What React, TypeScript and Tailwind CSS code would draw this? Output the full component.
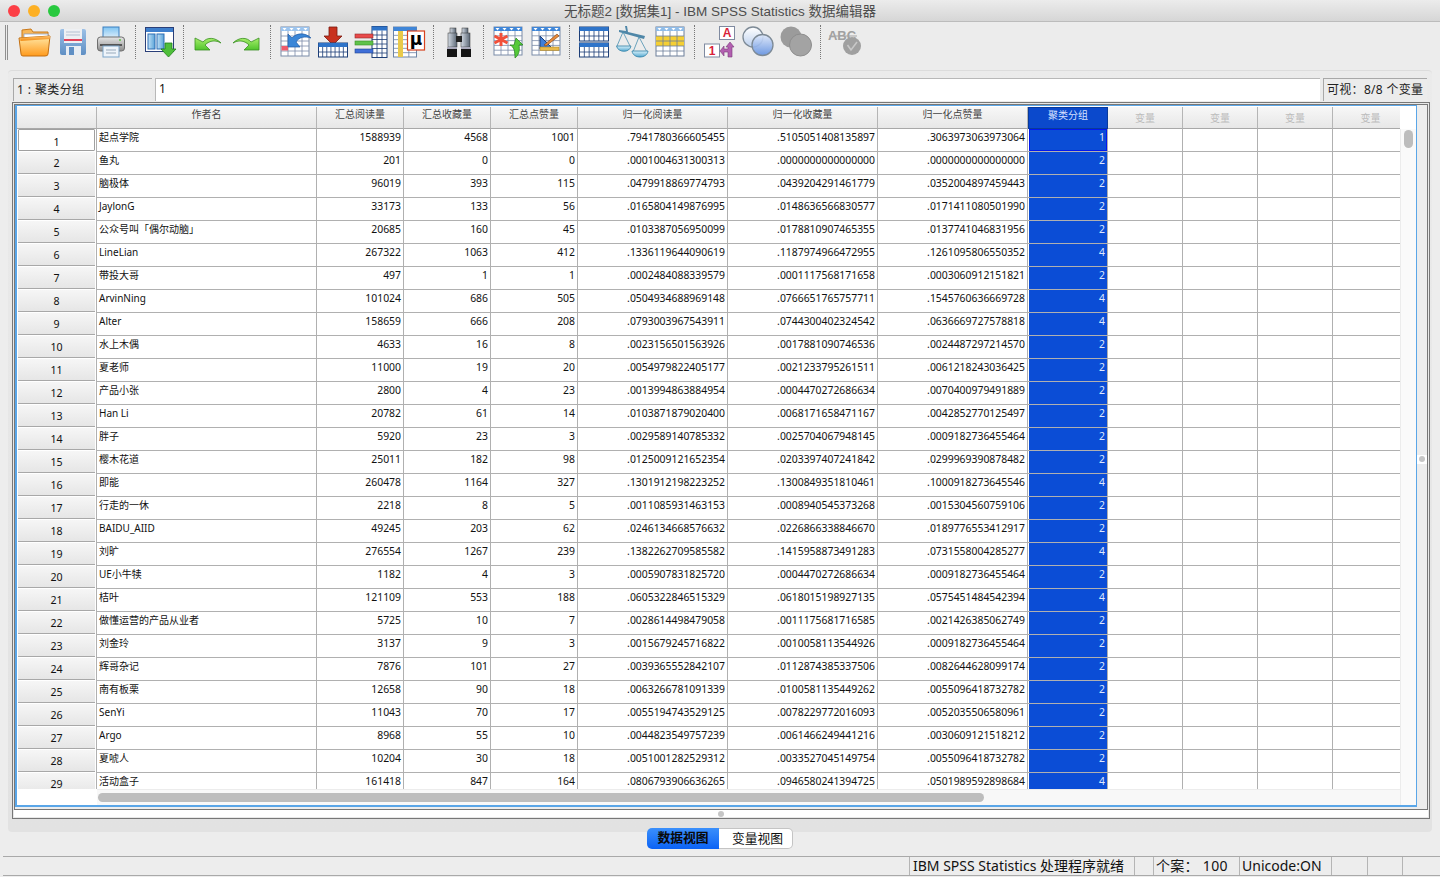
import type { ReactNode } from 'react';

const latin = "font-['Noto_Sans','Noto_Sans_CJK_SC',sans-serif]";

const raw = `起点学院|1588939|4568|1001|.7941780366605455|.5105051408135897|.3063973063973064|1
鱼丸|201|0|0|.0001004631300313|.0000000000000000|.0000000000000000|2
脑极体|96019|393|115|.0479918869774793|.0439204291461779|.0352004897459443|2
JaylonG|33173|133|56|.0165804149876995|.0148636566830577|.0171411080501990|2
公众号叫「偶尔动脑」|20685|160|45|.0103387056950099|.0178810907465355|.0137741046831956|2
LineLian|267322|1063|412|.1336119644090619|.1187974966472955|.1261095806550352|4
带投大哥|497|1|1|.0002484088339579|.0001117568171658|.0003060912151821|2
ArvinNing|101024|686|505|.0504934688969148|.0766651765757711|.1545760636669728|4
Alter|158659|666|208|.0793003967543911|.0744300402324542|.0636669727578818|4
水上木偶|4633|16|8|.0023156501563926|.0017881090746536|.0024487297214570|2
夏老师|11000|19|20|.0054979822405177|.0021233795261511|.0061218243036425|2
产品小张|2800|4|23|.0013994863884954|.0004470272686634|.0070400979491889|2
Han Li|20782|61|14|.0103871879020400|.0068171658471167|.0042852770125497|2
胖子|5920|23|3|.0029589140785332|.0025704067948145|.0009182736455464|2
樱木花道|25011|182|98|.0125009121652354|.0203397407241842|.0299969390878482|2
即能|260478|1164|327|.1301912198223252|.1300849351810461|.1000918273645546|4
行走的一休|2218|8|5|.0011085931463153|.0008940545373268|.0015304560759106|2
BAIDU_AIID|49245|203|62|.0246134668576632|.0226866338846670|.0189776553412917|2
刘旷|276554|1267|239|.1382262709585582|.1415958873491283|.0731558004285277|4
UE小牛犊|1182|4|3|.0005907831825720|.0004470272686634|.0009182736455464|2
桔叶|121109|553|188|.0605322846515329|.0618015198927135|.0575451484542394|4
做懂运营的产品从业者|5725|10|7|.0028614498479058|.0011175681716585|.0021426385062749|2
刘金玲|3137|9|3|.0015679245716822|.0010058113544926|.0009182736455464|2
辉哥杂记|7876|101|27|.0039365552842107|.0112874385337506|.0082644628099174|2
南有板栗|12658|90|18|.0063266781091339|.0100581135449262|.0055096418732782|2
SenYi|11043|70|17|.0055194743529125|.0078229772016093|.0052035506580961|2
Argo|8968|55|10|.0044823549757239|.0061466249441216|.0030609121518212|2
夏唬人|10204|30|18|.0051001282529312|.0033527045149754|.0055096418732782|2
活动盒子|161418|847|164|.0806793906636265|.0946580241394725|.0501989592898684|4`;

const rows = raw.split('\n').map((l) => l.split('|'));

const numCols = [
  { w: 'w-[87px]', title: '汇总阅读量' },
  { w: 'w-[87px]', title: '汇总收藏量' },
  { w: 'w-[87px]', title: '汇总点赞量' },
  { w: 'w-[150px]', title: '归一化阅读量' },
  { w: 'w-[150px]', title: '归一化收藏量' },
  { w: 'w-[150px]', title: '归一化点赞量' },
];
const emptyCols = ['w-[75px]', 'w-[75px]', 'w-[75px]', 'w-[68px]'];

function Lg({ id, a, b, h }: { id: string; a: string; b: string; h?: boolean }) {
  return (
    <linearGradient id={id} x1="0" y1="0" x2={h ? '1' : '0'} y2={h ? '0' : '1'}>
      <stop offset="0" stopColor={a} />
      <stop offset="1" stopColor={b} />
    </linearGradient>
  );
}

// small spreadsheet used by most toolbar icons
function Tbl({ x, y, w, h, rows, cols, head = '#2f74c9', line = '#5d7ca6', lit, ticks }: {
  x: number; y: number; w: number; h: number; rows: number; cols: number; head?: string; line?: string; lit?: number; ticks?: boolean;
}) {
  const cw = w / cols;
  const rh = (h - 4) / rows;
  return (
    <g>
      <rect x={x} y={y} width={w} height={h} fill="#fff" stroke={line} />
      <rect x={x} y={y} width={w} height={4} fill={head} />
      {ticks && Array.from({ length: cols }, (_, i) => (
        <path key={i} d={`M${x + cw * i + cw / 2 - 2} ${y + 1} h4 l-2 2.5 z`} fill="#fff" />
      ))}
      {lit !== undefined && <rect x={x} y={y + 4 + lit * rh} width={w} height={rh * 2} fill="#f5cf33" />}
      {Array.from({ length: cols - 1 }, (_, i) => (
        <line key={i} x1={x + cw * (i + 1)} y1={y + 4} x2={x + cw * (i + 1)} y2={y + h} stroke={line} strokeWidth="0.8" />
      ))}
      {Array.from({ length: rows - 1 }, (_, i) => (
        <line key={i} x1={x} y1={y + 4 + rh * (i + 1)} x2={x + w} y2={y + 4 + rh * (i + 1)} stroke={line} strokeWidth="0.8" />
      ))}
    </g>
  );
}

function Ico({ children }: { children: ReactNode }) {
  return <svg width="34" height="34" viewBox="0 0 34 34">{children}</svg>;
}

const icons: Record<string, ReactNode> = {
  open: (
    <Ico>
      <defs>
        <Lg id="f1" a="#ffe9a8" b="#ff9a1c" />
        <Lg id="f2" a="#ffc06a" b="#f08a12" />
      </defs>
      <path d="M4 5 L13 4 L15 7 L30 7 L30 16 L4 16 Z" fill="#f7b75a" stroke="#c9781a" />
      <rect x="6" y="9" width="24" height="8" fill="#fff" stroke="#7d97c4" strokeWidth="0.7" />
      <path d="M1 13 L32 11 L30 29 Q30 31 27 31 L5 31 Q3 31 3 29 Z" fill="url(#f1)" stroke="#c46f10" />
      <path d="M2 13 L32 11 L31.5 14 L2.5 16 Z" fill="url(#f2)" />
    </Ico>
  ),
  save: (
    <Ico>
      <defs><Lg id="s1" a="#9cc0e6" b="#5f8fc4" /></defs>
      <rect x="4" y="4" width="26" height="26" rx="2" fill="url(#s1)" />
      <rect x="8" y="4" width="18" height="14" fill="#eef0f3" />
      <rect x="8" y="14" width="18" height="2" fill="#e2425a" />
      <line x1="10" y1="7" x2="24" y2="7" stroke="#b5c2d2" />
      <line x1="10" y1="10" x2="24" y2="10" stroke="#b5c2d2" />
      <rect x="10" y="21" width="15" height="9" fill="#e8edf3" />
      <rect x="13" y="22" width="5" height="8" fill="#5f8fc4" />
    </Ico>
  ),
  print: (
    <Ico>
      <defs>
        <Lg id="p1" a="#e6e6e6" b="#8d8d8d" />
        <Lg id="p2" a="#7fc4f2" b="#e6f2fb" />
      </defs>
      <rect x="9" y="2" width="16" height="12" fill="url(#p2)" stroke="#3b7fc0" />
      <rect x="3.5" y="12" width="27" height="14" rx="3" fill="url(#p1)" stroke="#6e6e6e" />
      <rect x="6" y="19" width="22" height="2" fill="#555" />
      <circle cx="26" cy="15" r="1" fill="#5fc24a" />
      <rect x="9" y="21" width="16" height="11" fill="#eef4fa" stroke="#7da5c9" />
      <line x1="12" y1="25" x2="22" y2="25" stroke="#9ab" />
      <line x1="12" y1="28" x2="22" y2="28" stroke="#9ab" />
    </Ico>
  ),
  goto: (
    <Ico>
      <defs><Lg id="g1" a="#bfe0f6" b="#5aa3d8" h /></defs>
      <rect x="2.5" y="2.5" width="28" height="24" fill="#fff" stroke="#2a3f78" />
      <rect x="3" y="3" width="27" height="4" fill="#3f7fcc" />
      <rect x="5" y="9" width="7" height="15" fill="url(#g1)" stroke="#2f6fb5" />
      <rect x="14" y="9" width="7" height="15" fill="url(#g1)" stroke="#2f6fb5" />
      <path d="M22 18 H29 V24 H33 L25.5 32 L18 24 H22 Z" fill="#4fbf3a" stroke="#1f7f1a" strokeWidth="0.8" />
    </Ico>
  ),
  undo: (
    <Ico>
      <defs><Lg id="u1" a="#a8ee6c" b="#4fc42c" /></defs>
      <path d="M4 13 L12 17 C16 12 24 12 30 18 C25 15 19 15 14 20 L19 25 L4 25 Z" fill="url(#u1)" stroke="#3a8f24" strokeWidth="0.8" />
    </Ico>
  ),
  redo: (
    <Ico>
      <defs><Lg id="r1" a="#a8ee6c" b="#4fc42c" /></defs>
      <path d="M30 13 L22 17 C18 12 10 12 4 18 C9 15 15 15 20 20 L15 25 L30 25 Z" fill="url(#r1)" stroke="#3a8f24" strokeWidth="0.8" />
    </Ico>
  ),
  gotoCase: (
    <Ico>
      <Tbl x={3} y={2} w={28} h={29} rows={5} cols={4} head="#9cc4ee" line="#7b8ca8" ticks />
      <rect x="3.5" y="21" width="6.5" height="4.5" fill="#ef5b6c" />
      <path d="M10 9 L14 13 C18 8 27 7 33 13 C27 11 21 12 18 17 L22 22 L10 22 Z" fill="#3a86d8" stroke="#1f5aa5" strokeWidth="0.7" />
    </Ico>
  ),
  gotoVar: (
    <Ico>
      <path d="M13 2 H21 V11 H26 L17 20 L8 11 H13 Z" fill="#c8321f" stroke="#7a1a10" strokeWidth="0.8" />
      <Tbl x={2.5} y={18} w={29} h={14} rows={2} cols={7} head="#2f74c9" line="#1d3e77" />
    </Ico>
  ),
  vars: (
    <Ico>
      <Tbl x={18} y={1.5} w={15} h={31} rows={6} cols={3} head="#2f74c9" line="#1d3e77" />
      <rect x="1" y="9" width="18" height="4" fill="#e84a4a" stroke="#8f2a2a" strokeWidth="0.6" />
      <rect x="1" y="16" width="18" height="4" fill="#5fc24a" stroke="#3a8f24" strokeWidth="0.6" />
      <rect x="1" y="24" width="18" height="4" fill="#3f6fd8" stroke="#24458f" strokeWidth="0.6" />
    </Ico>
  ),
  stats: (
    <Ico>
      <Tbl x={1.5} y={2} w={23} h={30} rows={6} cols={3} head="#3f86d8" line="#6d84a6" />
      <rect x="6" y="6" width="5" height="26" fill="#e9c94a" />
      <rect x="15.5" y="6" width="17" height="19" fill="#fff" stroke="#d8421f" strokeWidth="1.2" />
      <text x="24" y="20" textAnchor="middle" fontSize="17" fontWeight="900" fill="#000" fontFamily="'DejaVu Sans',sans-serif">μ</text>
    </Ico>
  ),
  find: (
    <Ico>
      <defs><Lg id="b1" a="#d4dbe4" b="#5b6775" h /></defs>
      <rect x="8" y="3" width="6" height="6" fill="url(#b1)" stroke="#333" strokeWidth="0.5" />
      <rect x="20" y="3" width="6" height="6" fill="url(#b1)" stroke="#333" strokeWidth="0.5" />
      <rect x="6" y="8" width="9" height="14" fill="url(#b1)" stroke="#333" strokeWidth="0.5" />
      <rect x="19" y="8" width="9" height="14" fill="url(#b1)" stroke="#333" strokeWidth="0.5" />
      <rect x="14" y="11" width="6" height="6" fill="#222" />
      <rect x="5" y="22" width="10" height="10" fill="#151515" />
      <rect x="19" y="22" width="10" height="10" fill="#151515" />
      <rect x="5" y="22" width="10" height="2" fill="#aab" />
      <rect x="19" y="22" width="10" height="2" fill="#aab" />
    </Ico>
  ),
  insCase: (
    <Ico>
      <Tbl x={3} y={2} w={28} h={28} rows={5} cols={4} head="#3f86d8" line="#7b8ca8" ticks />
      <path d="M10 8 V21 M3.5 11 L16.5 18 M16.5 11 L3.5 18" stroke="#f2503a" strokeWidth="3" />
      <path d="M24 33 C24 26 23 22 19 20 L23 20 L25 13 L32 20 L28 20 C29 25 28 30 24 33 Z" fill="#55c93a" stroke="#22801c" strokeWidth="0.7" />
    </Ico>
  ),
  insVar: (
    <Ico>
      <Tbl x={3} y={2} w={28} h={28} rows={5} cols={4} head="#3f86d8" line="#7b8ca8" ticks />
      <path d="M11 11 V24 H24 Z" fill="#3f7fd8" stroke="#1d3e77" />
      <rect x="11" y="22" width="19" height="3.5" fill="#e9b94a" stroke="#a57d1a" strokeWidth="0.5" />
      <path d="M15 20 L28 9 L30 11 L17 21 Z" fill="#e88a3a" stroke="#7a4010" strokeWidth="0.6" />
    </Ico>
  ),
  split: (
    <Ico>
      <Tbl x={2.5} y={2} w={29} h={14} rows={2} cols={6} head="#2f74c9" line="#1d3e77" />
      <Tbl x={2.5} y={18} w={29} h={14} rows={2} cols={6} head="#2f74c9" line="#1d3e77" />
    </Ico>
  ),
  weight: (
    <Ico>
      <defs><Lg id="w1" a="#d6f0fa" b="#55a8d0" /></defs>
      <path d="M10 1 L12 1 L13 7 L30 11 L29 14 L4 7 L4 5 L11 6 Z" fill="#4f87a8" />
      <path d="M8 7 L2 21 M8 7 L15 21 M24 12 L18 27 M24 12 L32 27" stroke="#4a8fb0" strokeWidth="0.8" fill="none" />
      <path d="M1.5 21 H16 C15 28 3 28 1.5 21 Z" fill="url(#w1)" stroke="#2f7fa5" strokeWidth="0.8" />
      <path d="M17 26 H33 C32 34 18 34 17 26 Z" fill="url(#w1)" stroke="#2f7fa5" strokeWidth="0.8" />
    </Ico>
  ),
  select: (
    <Ico>
      <Tbl x={3} y={2} w={28} h={29} rows={5} cols={4} head="#8fbce8" line="#6d7f9a" lit={1} ticks />
    </Ico>
  ),
  labels: (
    <Ico>
      <rect x="16.5" y="1.5" width="15" height="13" fill="#fff" stroke="#7f8aa0" />
      <text x="24" y="12" textAnchor="middle" fontSize="12" fontWeight="900" fill="#d81f3a" fontFamily="'Liberation Sans',sans-serif">A</text>
      <rect x="1.5" y="19" width="15" height="13" fill="#fff" stroke="#7f8aa0" />
      <text x="9" y="30" textAnchor="middle" fontSize="12" fontWeight="900" fill="#d81f3a" fontFamily="'Liberation Sans',sans-serif">1</text>
      <path d="M27 17 L31 22 H29 V32 H25 V27 L21 27 V31 L17 26 L21 21 V24 H25 V22 H23 Z" fill="#b25fb0" stroke="#7a3a7a" strokeWidth="0.6" />
    </Ico>
  ),
  sets: (
    <Ico>
      <defs>
        <Lg id="c1" a="#ffffff" b="#bcd0ee" />
        <Lg id="c2" a="#dfe9fb" b="#5f8fe0" />
      </defs>
      <circle cx="12" cy="12" r="10" fill="url(#c1)" stroke="#7d8a96" strokeWidth="1.3" />
      <circle cx="21.5" cy="20" r="10.5" fill="url(#c2)" fillOpacity="0.9" stroke="#7d8a96" strokeWidth="1.3" />
    </Ico>
  ),
  setsOff: (
    <Ico>
      <circle cx="12" cy="12" r="10.5" fill="#9b9b9b" />
      <circle cx="21.5" cy="20" r="11" fill="#a3a3a3" stroke="#8d8d8d" />
    </Ico>
  ),
  spell: (
    <Ico>
      <text x="14" y="15" textAnchor="middle" fontSize="13" fontWeight="700" fill="#a0a0a0" fontFamily="'Liberation Sans',sans-serif">ABC</text>
      <line x1="1" y1="11" x2="29" y2="11" stroke="#a5a5a5" />
      <circle cx="24" cy="21" r="9" fill="#a0a0a0" />
      <path d="M19.5 20 L23 25 L29 17" stroke="#c8c8c8" strokeWidth="1.6" fill="none" />
    </Ico>
  ),
};

function Sep({ w }: { w: string }) {
  return (
    <div className={`${w} h-[34px] flex justify-center`}>
      <div className="h-full border-l border-dotted border-[#777]" />
    </div>
  );
}

function Btn({ name }: { name: string }) {
  return <div className="w-[38px] h-[34px] flex justify-center shrink-0">{icons[name]}</div>;
}

function Toolbar() {
  return (
    <div className="h-[48px] bg-[#ececec] flex items-start pl-[5px] pt-[3px]">
      <div className="w-[11px] h-[35px] flex gap-[1px]">
        <div className="w-px h-full bg-[#8f8f8f]" />
        <div className="w-px h-full bg-[#8f8f8f]" />
      </div>
      <Btn name="open" /><Btn name="save" /><Btn name="print" />
      <Sep w="w-[10.5px]" />
      <Btn name="goto" />
      <Sep w="w-[10.5px]" />
      <Btn name="undo" /><Btn name="redo" />
      <Sep w="w-[10.5px]" />
      <Btn name="gotoCase" /><Btn name="gotoVar" /><Btn name="vars" /><Btn name="stats" />
      <Sep w="w-[12.5px]" />
      <Btn name="find" />
      <Sep w="w-[10.5px]" />
      <Btn name="insCase" /><Btn name="insVar" />
      <Sep w="w-[10.5px]" />
      <Btn name="split" /><Btn name="weight" /><Btn name="select" />
      <Sep w="w-[11.5px]" />
      <Btn name="labels" /><Btn name="sets" /><Btn name="setsOff" />
      <Sep w="w-[11.5px]" />
      <Btn name="spell" />
    </div>
  );
}

function HeaderCell({ w, children, cls = '' }: { w: string; children?: ReactNode; cls?: string }) {
  return (
    <div className={`${w} shrink-0 h-full text-center text-[10px] leading-[14px] border-r border-b border-r-[#b5b5b5] border-b-[#a8a8a8] bg-gradient-to-b from-[#f7f7f7] to-[#e7e7e7] text-[#444] ${cls}`}>
      {children}
    </div>
  );
}

function Sheet() {
  return (
    <div className="flex-1 border-2 border-t border-[#5aa6e8] bg-white flex flex-col min-w-0 border-r-[1.5px] mb-[2px]">
      <div className="h-px" />
      <div className="flex flex-1 min-h-0">
        <div className="w-[1383px] shrink-0 flex flex-col">
          {/* column headers */}
          <div className="flex h-[22px] shrink-0">
            <HeaderCell w="w-[80px]" />
            <HeaderCell w="w-[220px]">作者名</HeaderCell>
            {numCols.map((c) => (
              <HeaderCell key={c.title} w={c.w}>{c.title}</HeaderCell>
            ))}
            <div className="w-[80px] shrink-0 h-full text-center text-[10px] leading-[14px] bg-[#0b49cc] border border-[#0a3a9a] text-[#d5e0ff]">聚类分组</div>
            {emptyCols.map((w, i) => (
              <HeaderCell key={i} w={w} cls={i === 3 ? 'border-r-0 pl-[7px]' : ''}>
                <span className="text-[#bcbcbc] leading-[22px]">变量</span>
              </HeaderCell>
            ))}
          </div>
          {/* data rows, the last one is cut off by the scrollbar */}
          <div className="h-[660px] overflow-hidden">
            {rows.map((r, i) => (
              <div key={i} className="flex h-[23px] text-[10.4px] leading-[14px] text-[#111]">
                <div className="w-[80px] shrink-0 border-r border-[#b0b0b0] pr-px pl-px">
                  <div className={`h-[22px] border-b text-center text-[10.6px] ${i === 0 ? 'pt-[5px] bg-white border border-[#a0a0a0] rounded-[1px]' : 'pt-[4px] bg-gradient-to-b from-[#f6f6f6] to-[#e6e6e6] border-[#a8a8a8]'}`}>
                    {i + 1}
                  </div>
                </div>
                <div className="w-[220px] shrink-0 border-r border-b border-[#b0b0b0] pl-[2px] pt-px text-[10px] whitespace-nowrap">{r[0]}</div>
                {numCols.map((c, j) => (
                  <div key={c.title} className={`${c.w} shrink-0 border-r border-b border-[#b0b0b0] text-right pr-[2px] pt-px`}>
                    {r[j + 1]}
                  </div>
                ))}
                <div className="w-[80px] shrink-0 border-r border-b border-[#b0b0b0] pl-px">
                  <div className={`h-full bg-[#0b4dd6] text-right pr-[2px] pt-px text-[#dfe8ff] ${i === 0 ? 'outline outline-1 -outline-offset-1 outline-[#0018f0]' : ''}`}>
                    {r[7]}
                  </div>
                </div>
                {emptyCols.map((w, k) => (
                  <div key={k} className={`${w} shrink-0 border-b border-[#b0b0b0] ${k < 3 ? 'border-r' : ''}`} />
                ))}
              </div>
            ))}
          </div>
          {/* horizontal scrollbar */}
          <div className="flex-1 flex">
            <div className="w-[80px] shrink-0 bg-white" />
            <div className="flex-1 bg-[#f8f8f8] border-t border-[#ececec] pt-[3px] pl-px">
              <div className="w-[886px] h-[9px] rounded-full bg-[#bdbdbd]" />
            </div>
          </div>
        </div>
        {/* vertical scrollbar */}
        <div className="flex-1 flex flex-col">
          <div className="h-[22px] bg-white" />
          <div className="flex-1 bg-[#fafafa] border-l border-[#ececec] pt-px pl-[3px]">
            <div className="w-[9px] h-[18px] rounded-full bg-[#bdbdbd]" />
          </div>
        </div>
      </div>
    </div>
  );
}

function Panel() {
  return (
    <div className="h-[762px] mx-2 rounded-[4px] bg-gradient-to-b from-[#ebebeb] to-[#e2e2e2] border-t border-[#dcdcdc] px-[4px] pt-[7px] flex flex-col">
      {/* cell editor bar */}
      <div className="h-[23px] flex ml-px shrink-0">
        <div className="w-[139px] shrink-0 bg-[#ececec] border-t border-l border-[#a8a8a8] text-[12px] leading-[22px] pl-[3px] text-[#222] tracking-[0.4px]">1 : 聚类分组</div>
        <div className="w-[1165px] shrink-0 ml-[3px] bg-white border-t border-l border-[#b8b8b8] text-[12px] leading-[19px] pl-[3px] text-[#111]">1</div>
        <div className="w-[104px] shrink-0 ml-[3px] bg-[#ececec] border-t border-l border-[#a8a8a8] text-[12px] leading-[22px] pl-[3px] text-[#222] whitespace-nowrap tracking-[0.3px]">可视：8/8 个变量</div>
      </div>
      {/* grid frame */}
      <div className="mt-px h-[717px] w-[1418px] border border-[#777] p-px bg-[#e8e8e8] flex flex-col shrink-0">
        <div className="h-[706px] border border-[#777] bg-[#ededed] flex shrink-0">
          <Sheet />
          <div className="w-[10px] shrink-0 flex items-center justify-center pt-[4px]">
            <div className="w-[10px] h-[9px] bg-white flex items-center justify-center">
              <div className="w-[6px] h-[6px] rounded-full bg-[#c6c6c6]" />
            </div>
          </div>
        </div>
        <div className="flex-1 bg-white flex items-center justify-center">
          <div className="w-[6px] h-[6px] rounded-full bg-[#c6c6c6]" />
        </div>
      </div>
    </div>
  );
}

function Tabs() {
  return (
    <div className="h-[21px] -mt-1 flex justify-center relative">
      <div className="w-[72px] rounded-l-[5px] bg-gradient-to-b from-[#3a8ffb] to-[#0a62f5] text-[12.8px] leading-[19px] text-center font-semibold text-[#0a0a0a]">数据视图</div>
      <div className="w-[74px] rounded-r-[5px] bg-white border border-l-0 border-[#c4c4c4] text-[12.8px] leading-[18px] text-center text-[#111] pl-[4px]">变量视图</div>
    </div>
  );
}

function Status() {
  return (
    <div className="mt-[7px] h-[20px] ml-[3px] border-t border-b border-[#a9a9a9] flex text-[14px] leading-[17px] text-[#111] bg-[#ededed]">
      <div className="w-[907px] border-r border-[#b5b5b5]" />
      <div className="w-[225px] border-r border-[#b5b5b5] pl-[3px] whitespace-nowrap">IBM SPSS Statistics 处理程序就绪</div>
      <div className="w-[19px] border-r border-[#b5b5b5]" />
      <div className="w-[86px] border-r border-[#b5b5b5] pl-[2px] whitespace-nowrap tracking-[0.3px]">个案：&nbsp;100</div>
      <div className="w-[92px] border-r border-[#b5b5b5] pl-[2px] whitespace-nowrap">Unicode:ON</div>
      <div className="w-[36px] border-r border-[#b5b5b5]" />
      <div className="w-[35px] border-r border-[#b5b5b5]" />
      <div className="flex-1" />
    </div>
  );
}

export default function App() {
  return (
    <div className={`w-[1440px] h-[877px] overflow-hidden bg-[#ededed] flex flex-col ${latin}`}>
      {/* mac title bar */}
      <div className="h-[22px] shrink-0 relative flex items-center justify-center bg-gradient-to-b from-[#ececec] to-[#d6d6d6] border-b border-[#bcbcbc]">
        <div className="absolute left-[8px] top-[5px] flex gap-[8px]">
          <div className="w-[12px] h-[12px] rounded-full bg-[#fc3f46]" />
          <div className="w-[12px] h-[12px] rounded-full bg-[#fdb024]" />
          <div className="w-[12px] h-[12px] rounded-full bg-[#28c93f]" />
        </div>
        <span className="text-[13.5px] leading-[20px] pt-[2px] text-[#4d4d4d] font-['Liberation_Sans','Noto_Sans_CJK_SC',sans-serif]">无标题2 [数据集1] - IBM SPSS Statistics 数据编辑器</span>
      </div>
      <Toolbar />
      <Panel />
      <Tabs />
      <Status />
    </div>
  );
}
